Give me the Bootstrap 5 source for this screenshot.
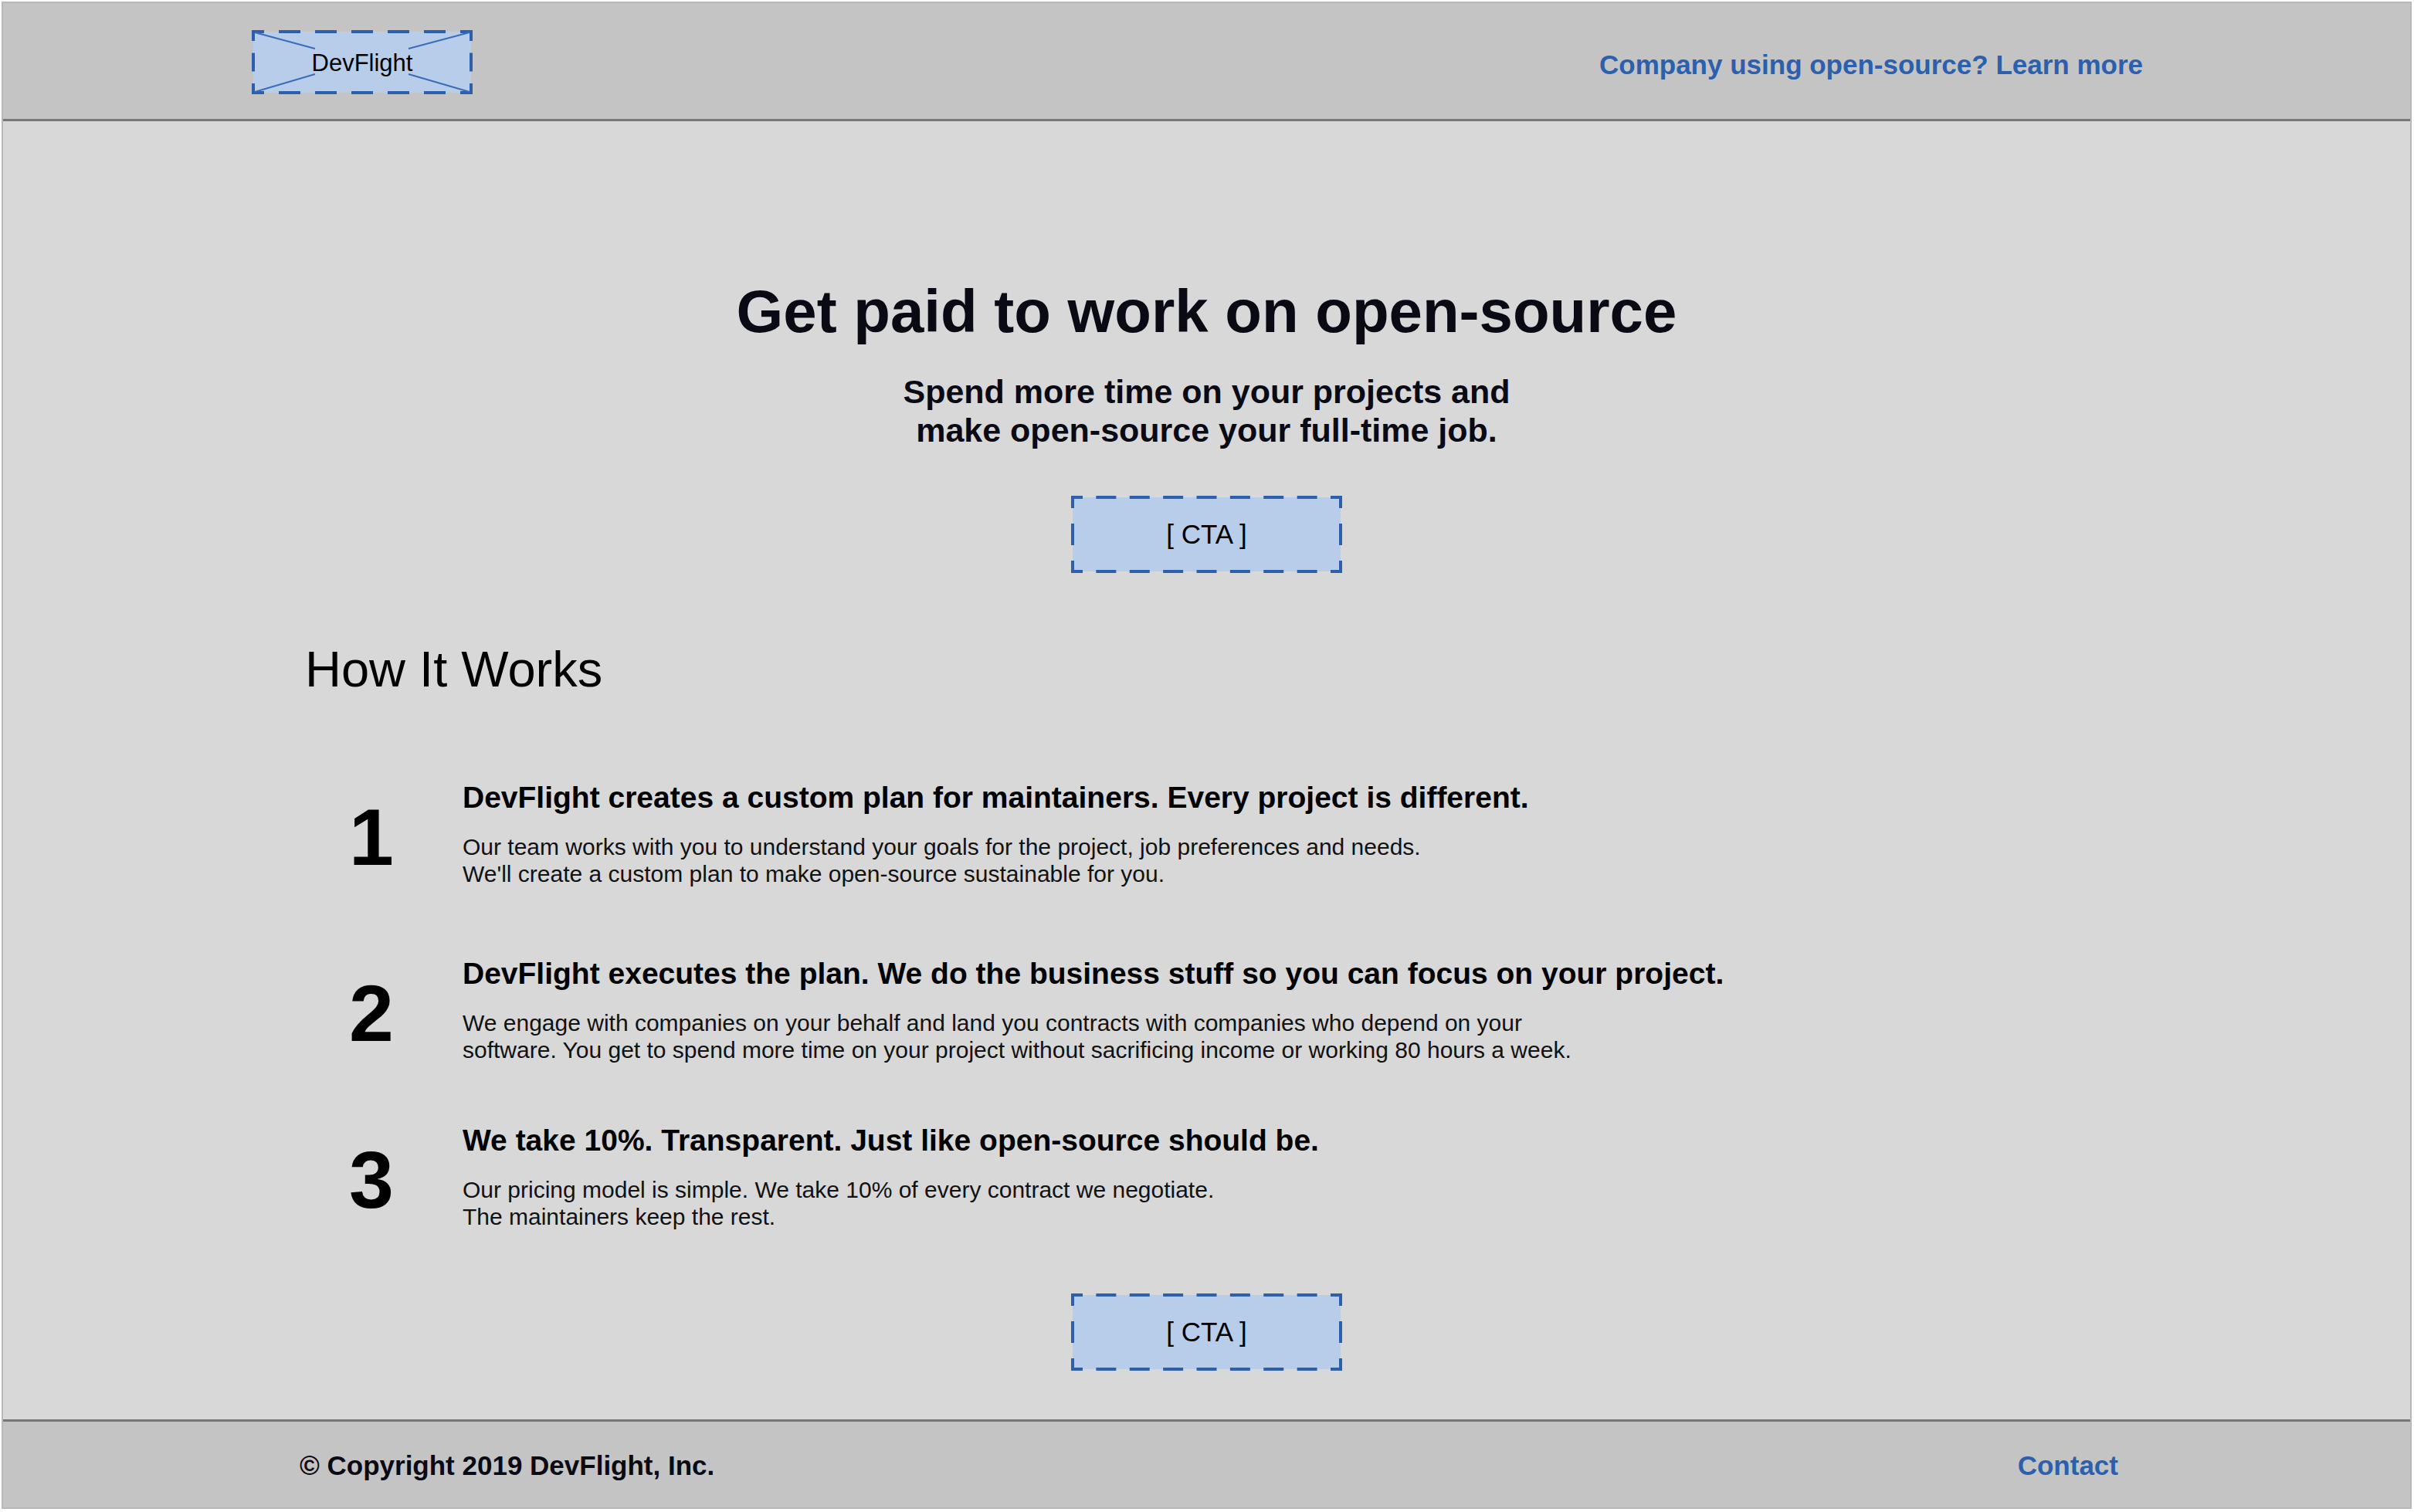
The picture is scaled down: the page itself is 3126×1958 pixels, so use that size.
<!DOCTYPE html>
<html lang="en">
<head>
<meta charset="utf-8">
<meta name="viewport" content="width=device-width, initial-scale=1">
<title>DevFlight</title>
<link href="https://cdn.jsdelivr.net/npm/bootstrap@5.3.0/dist/css/bootstrap.min.css" rel="stylesheet">
<style>
  body { font-family: "Liberation Sans", Arial, sans-serif; background: #fff; color: #000; padding: 2px 3px 4px 2px; }
  .frame { border: 2px solid #b8b8b8; background: #d8d8d8; }
  .site-head { background: #c4c4c4; border-bottom: 3px solid #777; padding: 35px 346px 32px 322px; }
  .site-foot { background: #c4c4c4; border-top: 3px solid #777; padding: 37px 378px 34px 384px; font-size: 35px; line-height: 40px; font-weight: 700; color: #0a0a14; }
  .site-link { font-size: 35px; line-height: 40px; font-weight: 700; color: #2c60ad; text-decoration: none; }
  .site-head .site-link { padding-top: 6px; }
  .brand-box { width: 286px; height: 83px; padding-top: 2px; font-size: 31px; line-height: 35px; color: #000; text-decoration: none; }
  .cta { width: 351px; height: 100px; border: 0; padding: 0; background: none; font-size: 35px; line-height: 40px; color: #000; }
  .outline { inset: 0; width: 100%; height: 100%; }
  .outline .fill-area { fill: #b8cde9; }
  .outline .dashes { fill: none; stroke: #2c60ad; stroke-width: 4; }
  .outline .cross { fill: none; stroke: #3a6cb8; stroke-width: 2; }
  .hero { padding-top: 201px; color: #0a0a14; }
  .hero h1 { font-size: 78px; line-height: 90px; font-weight: 700; margin-bottom: 34px; }
  .hero p { font-size: 43px; line-height: 50px; font-weight: 700; margin-bottom: 60px; }
  .how { padding: 87px 384px 82px 391px; }
  .how h2 { font-size: 65px; line-height: 75px; font-weight: 400; margin-bottom: 106px; }
  .steps { margin: 0; padding: 0 0 0 57px; }
  .step { margin-bottom: 77px; }
  .step:first-child { margin-bottom: 89px; }
  .step:last-child { margin-bottom: 0; }
  .step-no { font-size: 104px; line-height: 130px; font-weight: 700; width: 147px; }
  .step h3 { font-size: 39px; line-height: 45px; font-weight: 700; margin-bottom: 24px; }
  .step p { font-size: 30px; line-height: 35px; margin: 0; color: #111; }
  .closing { padding-bottom: 63px; }
</style>
</head>
<body>
<div class="frame">
  <header class="site-head d-flex justify-content-between align-items-center">
    <a href="#" class="brand-box position-relative d-flex justify-content-center align-items-center">
      <svg class="outline position-absolute" viewBox="0 0 286 83" aria-hidden="true">
        <path class="fill-area" d="M2 2H284V81H2Z"/>
        <path class="dashes" stroke-dasharray="28 19" stroke-dashoffset="12" d="M0 2H286M0 81H286"/>
        <path class="dashes" stroke-dasharray="24 15.5" stroke-dashoffset="10" d="M2 0V83M284 0V83"/>
        <path class="cross" d="M4 3L82 24M282 3L203 24M4 80L82 57M282 80L203 57"/>
      </svg>
      <span class="position-relative">DevFlight</span>
    </a>
    <a href="#" class="site-link">Company using open-source? Learn more</a>
  </header>

  <main>
    <section class="hero text-center">
      <h1>Get paid to work on open-source</h1>
      <p>Spend more time on your projects and<br>make open-source your full-time job.</p>
      <button type="button" class="cta position-relative">
        <svg class="outline position-absolute" viewBox="0 0 351 100" aria-hidden="true">
          <path class="fill-area" d="M2 2H349V98H2Z"/>
          <path class="dashes" stroke-dasharray="26 17.375" stroke-dashoffset="11" d="M0 2H351M0 98H351"/>
          <path class="dashes" stroke-dasharray="28 20" stroke-dashoffset="12" d="M2 0V100M349 0V100"/>
        </svg>
        <span class="position-relative">[ CTA ]</span>
      </button>
    </section>

    <section class="how">
      <h2>How It Works</h2>
      <ol class="steps list-unstyled">
        <li class="step d-flex align-items-end">
          <div class="step-no">1</div>
          <div>
            <h3>DevFlight creates a custom plan for maintainers. Every project is different.</h3>
            <p>Our team works with you to understand your goals for the project, job preferences and needs.<br>We'll create a custom plan to make open-source sustainable for you.</p>
          </div>
        </li>
        <li class="step d-flex align-items-end">
          <div class="step-no">2</div>
          <div>
            <h3>DevFlight executes the plan. We do the business stuff so you can focus on your project.</h3>
            <p>We engage with companies on your behalf and land you contracts with companies who depend on your<br>software. You get to spend more time on your project without sacrificing income or working 80 hours a week.</p>
          </div>
        </li>
        <li class="step d-flex align-items-end">
          <div class="step-no">3</div>
          <div>
            <h3>We take 10%. Transparent. Just like open-source should be.</h3>
            <p>Our pricing model is simple. We take 10% of every contract we negotiate.<br>The maintainers keep the rest.</p>
          </div>
        </li>
      </ol>
    </section>

    <div class="closing d-flex justify-content-center">
      <button type="button" class="cta position-relative">
        <svg class="outline position-absolute" viewBox="0 0 351 100" aria-hidden="true">
          <path class="fill-area" d="M2 2H349V98H2Z"/>
          <path class="dashes" stroke-dasharray="26 17.375" stroke-dashoffset="11" d="M0 2H351M0 98H351"/>
          <path class="dashes" stroke-dasharray="28 20" stroke-dashoffset="12" d="M2 0V100M349 0V100"/>
        </svg>
        <span class="position-relative">[ CTA ]</span>
      </button>
    </div>
  </main>

  <footer class="site-foot d-flex justify-content-between align-items-center">
    <span>© Copyright 2019 DevFlight, Inc.</span>
    <a href="#" class="site-link">Contact</a>
  </footer>
</div>
<script src="https://cdn.jsdelivr.net/npm/bootstrap@5.3.0/dist/js/bootstrap.bundle.min.js"></script>
</body>
</html>
